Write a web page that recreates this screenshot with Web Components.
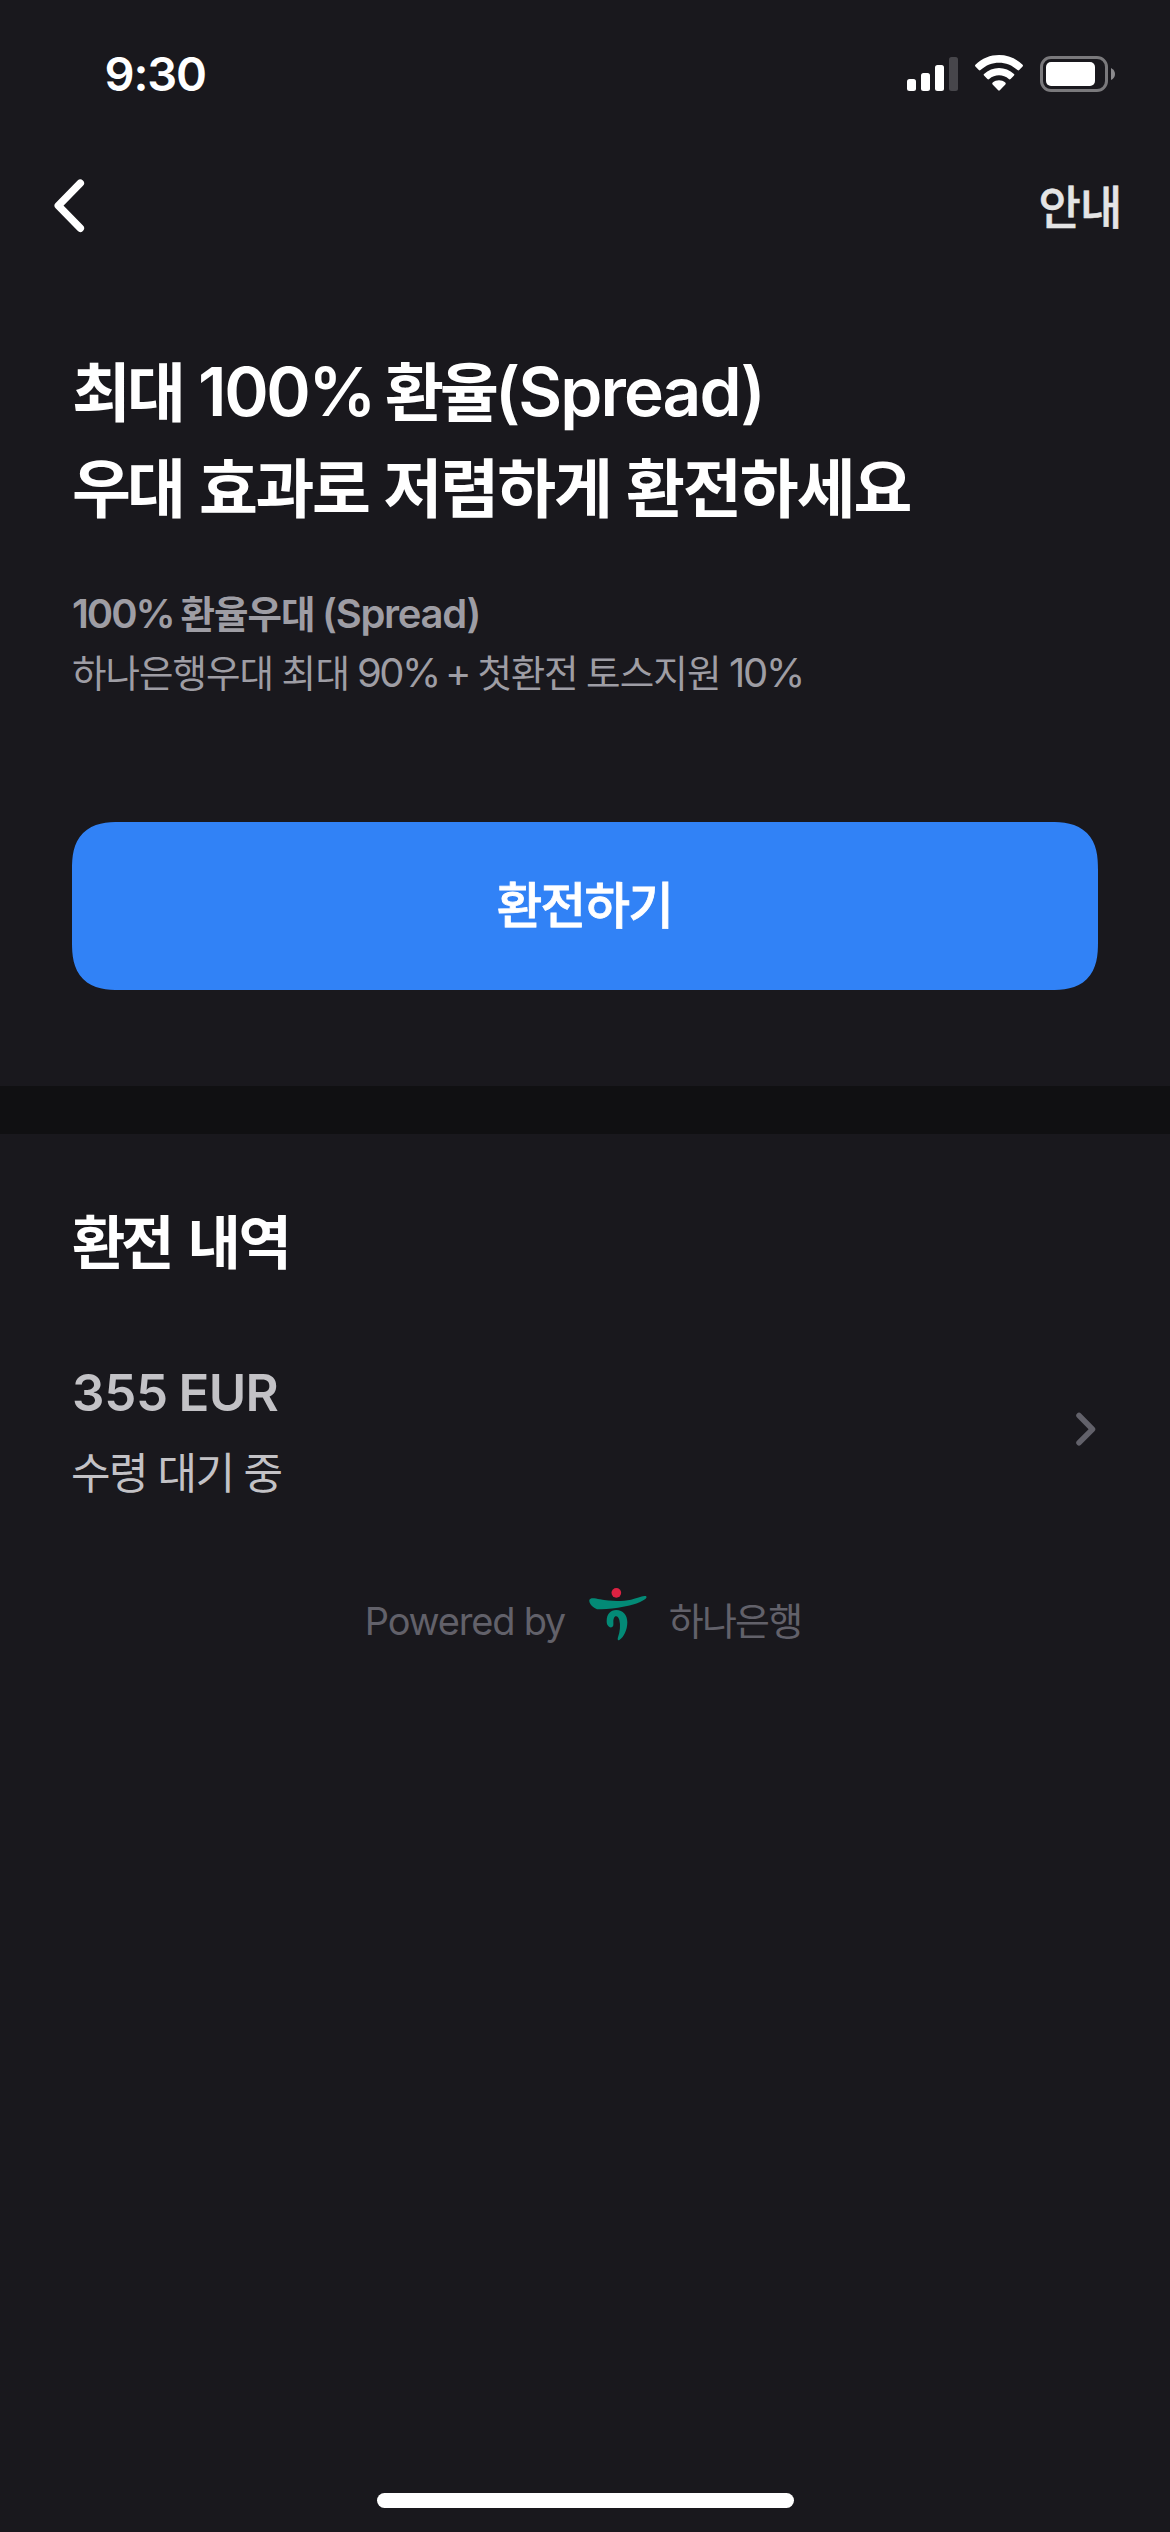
<!DOCTYPE html>
<html lang="ko">
<head>
<meta charset="utf-8">
<title>환전</title>
<style>
html, body { margin: 0; background: #19181d; }
body { width: 1170px; height: 2532px; overflow: hidden; font-family: Inter, "Noto Sans CJK KR", sans-serif; color: #fff; }
</style>
</head>
<body>
<exchange-screen></exchange-screen>
<script>
const define = (name, html, setup) => {
  const tpl = document.createElement('template');
  tpl.innerHTML = html;
  customElements.define(name, class extends HTMLElement {
    constructor() {
      super();
      this.attachShadow({ mode: 'open' }).append(tpl.content.cloneNode(true));
    }
    connectedCallback() { if (setup) setup(this); }
  });
};

/* A word whose tracking is adjusted so its visible glyphs span exactly `ink` pixels. */
const pen = document.createElement('canvas').getContext('2d');
define('fit-word', `<style>
  :host { display: block; flex: none; white-space: nowrap; }
</style><slot></slot>`, el => {
  const cs = getComputedStyle(el);
  pen.font = `${cs.fontWeight} ${cs.fontSize} ${cs.fontFamily}`;
  const text = el.textContent.trim();
  const m = pen.measureText(text);
  const ink = +el.getAttribute('ink');
  const natural = m.actualBoundingBoxLeft + m.actualBoundingBoxRight;
  const n = [...text].length;
  el.style.width = ink + 'px';
  el.style.textIndent = m.actualBoundingBoxLeft + 'px';
  if (n > 1) el.style.letterSpacing = (ink - natural) / (n - 1) + 'px';
});

define('text-line', `<style>
  :host { display: flex; align-items: baseline; white-space: nowrap; }
</style><slot></slot>`);

define('status-bar', `<style>
  :host { display: flex; justify-content: space-between; align-items: flex-start; height: 141px; padding: 0 55px 0 106.5px; box-sizing: border-box; }
  text-line { font-size: 47px; font-weight: 600; line-height: 60px; padding-top: 44px; }
  .icons { display: flex; gap: 16px; padding-top: 54px; }
  svg { display: block; }
</style>
<text-line><fit-word ink="98.5">9:30</fit-word></text-line>
<div class="icons">
  <svg width="51" height="38" viewBox="0 0 51 38" fill="#fff"><rect y="25" width="9" height="12" rx="2.5"/><rect x="14" y="19" width="9" height="18" rx="2.5"/><rect x="28" y="11" width="9" height="26" rx="2.5"/><rect x="42" y="3" width="9" height="34" rx="2.5" fill="#47464b"/></svg>
  <svg width="50" height="38" viewBox="974 54 50 38" fill="#fff"><path d="M975.4 64.7C988.5 51.8 1009.500 51.800 1022.600 64.700Q1023.400 65.500 1022.600 66.400L1019.200 70Q1018.400 70.800 1017.500 70C1007 60.200 991 60.200 980.500 70Q979.600 70.800 978.800 70L975.400 66.400Q974.600 65.500 975.400 64.700Z"/><path d="M984 73.900C992.300 65.900 1005.700 65.900 1014 73.900Q1014.900 74.700 1014 75.600L1010.600 79Q1009.700 79.800 1008.800 79C1003.200 74 994.800 74 989.200 79Q988.300 79.800 987.400 79L984 75.600Q983.100 74.700 984 73.900Z"/><path d="M992.700 82.600C996.400 79.600 1001.600 79.600 1005.300 82.600Q1006.300 83.500 1005.400 84.400L999.800 90.300Q999 91.100 998.200 90.300L992.600 84.400Q991.700 83.500 992.700 82.600Z"/></svg>
  <svg width="75" height="38" viewBox="1040 54 75 38"><rect x="1041.500" y="57.500" width="65" height="33" rx="9.500" fill="none" stroke="#7a797c" stroke-width="3"/><rect x="1046" y="62" width="49" height="24" rx="5" fill="#fff"/><path d="M1111 68Q1115 70 1115 74T1111 80Z" fill="#8b8a8d"/></svg>
</div>`);

define('nav-bar', `<style>
  :host { display: flex; justify-content: space-between; align-items: flex-start; height: 189px; padding: 0 52px 0 53px; box-sizing: border-box; }
  svg { display: block; padding-top: 36px; }
  text-line { font-size: 46px; font-weight: 500; line-height: 60px; color: #e4e4e5; padding-top: 36px; -webkit-text-stroke: .5px currentColor; }
</style>
<svg width="34" height="58" viewBox="53 177 34 58" fill="none" stroke="#fff" stroke-width="7.500" stroke-linecap="round" stroke-linejoin="round"><path d="M80.300 183.200L58.300 205.700L80.300 228.200"/></svg>
<text-line><fit-word ink="77.500">안내</fit-word></text-line>`);

define('hero-section', `<style>
  :host { display: block; padding: 14px 72px 96px; }
  .title { font-size: 64px; font-weight: 700; line-height: 96px; height: 96px; padding-left: 2px; }
  .title.first { height: 97px; }
  .latin { font-size: 67.500px; font-weight: 600; }
  .sub { font-size: 37.500px; line-height: 58px; height: 58px; color: #9e9da4; padding-left: 1px; }
  .sub.bold { font-weight: 700; margin-top: 48px; height: 59px; }
  .sub .latin { font-size: 40px; font-weight: 400; }
  .bold .latin { font-weight: 600; }
  fit-word + fit-word { margin-left: var(--gap); }
  .button { margin-top: 120px; }
</style>
<text-line class="title first"><fit-word ink="107">최대</fit-word><fit-word class="latin" style="--gap:20px" ink="169.500">100%</fit-word><fit-word style="--gap:15.500px" ink="111">환율</fit-word><fit-word class="latin" style="--gap:4px" ink="259.500">(Spread)</fit-word></text-line>
<text-line class="title"><fit-word ink="107">우대</fit-word><fit-word style="--gap:20px" ink="168">효과로</fit-word><fit-word style="--gap:15.500px" ink="223.500">저렴하게</fit-word><fit-word style="--gap:19px" ink="283.500">환전하세요</fit-word></text-line>
<text-line class="sub bold"><fit-word class="latin" ink="99.500">100%</fit-word><fit-word style="--gap:9px" ink="131.500">환율우대</fit-word><fit-word class="latin" style="--gap:12px" ink="153.500">(Spread)</fit-word></text-line>
<text-line class="sub"><fit-word ink="197.500">하나은행우대</fit-word><fit-word style="--gap:13px" ink="63">최대</fit-word><fit-word class="latin" style="--gap:12.500px" ink="78">90%</fit-word><fit-word class="latin" style="--gap:11px" ink="18.500">+</fit-word><fit-word style="--gap:12px" ink="96.500">첫환전</fit-word><fit-word style="--gap:12px" ink="131">토스지원</fit-word><fit-word class="latin" style="--gap:12px" ink="71">10%</fit-word></text-line>
<primary-button class="button"><fit-word ink="170.500">환전하기</fit-word></primary-button>`);

define('primary-button', `<style>
  :host { display: flex; justify-content: center; align-items: center; height: 168px; padding-right: 4px; border-radius: 42px; background: #3182f6; font-size: 49.500px; font-weight: 500; line-height: 60px; -webkit-text-stroke: .8px currentColor; }
  @supports (corner-shape: superellipse(1.4)) {
    :host { border-radius: 48px; corner-shape: superellipse(1.4); }
  }
</style><slot></slot>`);

define('section-divider', `<style>:host { display: block; height: 48px; background: #101012; }</style>`);

define('history-row', `<style>
  :host { display: flex; justify-content: space-between; align-items: center; padding: 0 73px 0 73px; color: #c3c2c6; }
  .amount { font-size: 51px; font-weight: 600; line-height: 80px; padding-left: 1px; }
  .state { font-size: 43px; font-weight: 400; line-height: 80px; }
  fit-word + fit-word { margin-left: var(--gap); }
  svg { display: block; margin-bottom: 8px; }
</style>
<div>
  <text-line class="amount"><fit-word ink="92">355</fit-word><fit-word style="--gap:15.500px" ink="97">EUR</fit-word></text-line>
  <text-line class="state"><fit-word ink="71">수령</fit-word><fit-word style="--gap:16.500px" ink="70">대기</fit-word><fit-word style="--gap:15px" ink="36.500">중</fit-word></text-line>
</div>
<svg width="22" height="36" viewBox="1075 1411.500 22 36" fill="none" stroke="#62616a" stroke-width="5.500" stroke-linecap="round" stroke-linejoin="round"><path d="M1079 1416L1092.500 1429.700L1079 1443.300"/></svg>`);

define('powered-by', `<style>
  :host { display: flex; align-items: flex-start; justify-content: center; color: #62616a; font-size: 38px; line-height: 60px; padding-right: 2px; }
  .hangul { font-size: 38px; }
  fit-word + fit-word { margin-left: 12.500px; }
  svg { display: block; margin: -4.500px 20.500px 0 23.500px; }
</style>
<text-line><fit-word ink="145.500">Powered</fit-word><fit-word ink="40">by</fit-word></text-line>
<svg width="60" height="56" viewBox="58 50 180 168"><circle cx="140" cy="67.500" r="14.500" fill="#dc2242"/><g fill="#038a76"><path d="M59 89C62 81 75 84 91 87C120 93 157 94 184 88C201 84 214 78 224 77C232 76 233 82 226 87C207 100 177 108 145 112C121 115 98 117 82 117C70 111 57 101 59 89Z"/><path d="M111 151C111 132 122 119 140 119C160 119 173 134 173 156C173 179 162 202 149 209C144 211 143 207 145 201C151 184 153 164 149 149C147 141 142 136 137 138C133 140 132 145 131 151C131 157 132 164 130 168C126 174 117 171 114 165C111 160 111 156 111 151Z"/></g></svg>
<text-line class="hangul"><fit-word ink="130.500">하나은행</fit-word></text-line>`);

define('home-indicator', `<style>:host { display: block; width: 417px; height: 15px; border-radius: 8px; background: #fff; margin: auto auto 24px; }</style>`);

define('exchange-screen', `<style>
  :host { display: flex; flex-direction: column; width: 1170px; height: 2532px; background: #19181d; }
  .heading { font-size: 58px; font-weight: 700; line-height: 80px; padding: 69px 73px 0; }
  .heading fit-word + fit-word { margin-left: 21.500px; }
  history-row { margin-top: 70px; }
  powered-by { margin-top: 78px; }
</style>
<status-bar></status-bar>
<nav-bar></nav-bar>
<hero-section></hero-section>
<section-divider></section-divider>
<text-line class="heading"><fit-word ink="97">환전</fit-word><fit-word ink="95">내역</fit-word></text-line>
<history-row></history-row>
<powered-by></powered-by>
<home-indicator></home-indicator>`);
</script>
</body>
</html>
